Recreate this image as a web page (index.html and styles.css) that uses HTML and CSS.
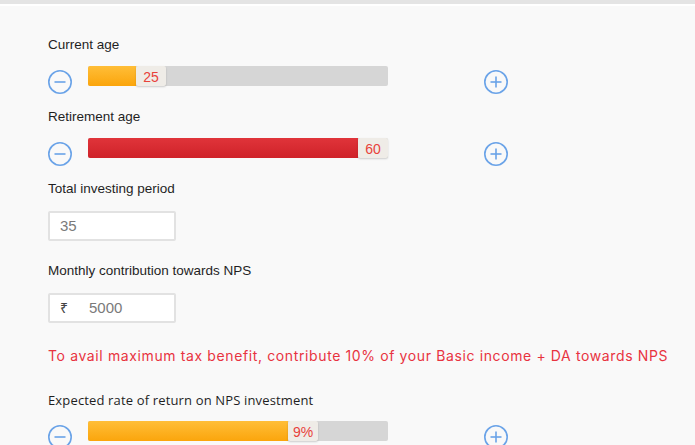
FILE: index.html
```html
<!DOCTYPE html>
<html lang="en">
<head>
    <meta charset="UTF-8">
    <meta name="viewport" content="width=device-width, initial-scale=1.0">
    <title>NPS Calculator</title>
    <link rel="stylesheet" href="styles.css">
</head>
<body>
    <div class="top-band"></div>
    <div class="calculator">
        <div class="field">
            <div class="label">Current age</div>
            <div class="slider-row">
                <button class="step minus" aria-label="decrease">
                    <svg viewBox="0 0 26 26" width="26" height="26"><circle cx="13" cy="13" r="11.2"/><line x1="7.5" y1="13" x2="18.5" y2="13"/></svg>
                </button>
                <div class="track">
                    <div class="fill orange" style="width: 48px"></div>
                    <div class="handle">25</div>
                </div>
                <button class="step plus" aria-label="increase">
                    <svg viewBox="0 0 26 26" width="26" height="26"><circle cx="13" cy="13" r="11.2"/><line x1="7.5" y1="13" x2="18.5" y2="13"/><line x1="13" y1="7.5" x2="13" y2="18.5"/></svg>
                </button>
            </div>
        </div>

        <div class="field">
            <div class="label">Retirement age</div>
            <div class="slider-row">
                <button class="step minus" aria-label="decrease">
                    <svg viewBox="0 0 26 26" width="26" height="26"><circle cx="13" cy="13" r="11.2"/><line x1="7.5" y1="13" x2="18.5" y2="13"/></svg>
                </button>
                <div class="track">
                    <div class="fill red" style="width: 270px"></div>
                    <div class="handle">60</div>
                </div>
                <button class="step plus" aria-label="increase">
                    <svg viewBox="0 0 26 26" width="26" height="26"><circle cx="13" cy="13" r="11.2"/><line x1="7.5" y1="13" x2="18.5" y2="13"/><line x1="13" y1="7.5" x2="13" y2="18.5"/></svg>
                </button>
            </div>
        </div>

        <div class="field boxed">
            <div class="label">Total investing period</div>
            <div class="value-box">35</div>
        </div>

        <div class="field boxed">
            <div class="label">Monthly contribution towards NPS</div>
            <div class="value-box"><span class="rupee">₹</span>5000</div>
        </div>

        <p class="tax-note">To avail maximum tax benefit, contribute 10% of your Basic income + DA towards NPS</p>

        <div class="field">
            <div class="label alt">Expected rate of return on NPS investment</div>
            <div class="slider-row">
                <button class="step minus" aria-label="decrease">
                    <svg viewBox="0 0 26 26" width="26" height="26"><circle cx="13" cy="13" r="11.2"/><line x1="7.5" y1="13" x2="18.5" y2="13"/></svg>
                </button>
                <div class="track">
                    <div class="fill orange" style="width: 200px"></div>
                    <div class="handle">9%</div>
                </div>
                <button class="step plus" aria-label="increase">
                    <svg viewBox="0 0 26 26" width="26" height="26"><circle cx="13" cy="13" r="11.2"/><line x1="7.5" y1="13" x2="18.5" y2="13"/><line x1="13" y1="7.5" x2="13" y2="18.5"/></svg>
                </button>
            </div>
        </div>
    </div>
</body>
</html>
```

FILE: styles.css
```css
* {
    box-sizing: border-box;
    margin: 0;
    padding: 0;
}

body {
    font-family: 'Liberation Sans', Arial, sans-serif;
    background: #f9f9f9;
    color: #222;
    overflow: hidden;
}

.top-band {
    height: 4px;
    background: #e4e4e4;
    border-bottom: 2px solid #ffffff;
    box-sizing: content-box;
}

.calculator {
    padding: 31px 0 0 48px;
}

.field {
    margin-bottom: 23px;
}

.field.boxed {
    margin-bottom: 22px;
}

.label {
    font-size: 13.5px;
    line-height: 16px;
    color: #1f1f1f;
    margin-bottom: 13px;
}

.field.boxed .label {
    margin-bottom: 14px;
}

.label.alt {
    font-family: 'Open Sans', Arial, sans-serif;
    font-size: 13px;
    letter-spacing: 0.15px;
}

.slider-row {
    display: flex;
    align-items: flex-start;
    height: 20px;
}

.step {
    background: none;
    border: none;
    width: 26px;
    height: 26px;
    margin-top: 3px;
    cursor: pointer;
}

.step svg {
    display: block;
    fill: none;
    stroke: #6aa3e8;
    stroke-width: 1.6;
}

.minus {
    margin-left: -1px;
}

.plus {
    margin-left: 95px;
}

.track {
    display: flex;
    width: 300px;
    height: 20px;
    margin-left: 15px;
    background: #d6d6d6;
    border-radius: 2px;
}

.fill {
    height: 100%;
    border-radius: 2px 0 0 2px;
}

.fill.orange {
    background: linear-gradient(#ffbe38, #fba50c);
}

.fill.red {
    background: linear-gradient(#e0343a, #cf2229);
}

.handle {
    width: 30px;
    height: 20px;
    background: #efece7;
    box-shadow: 0 1px 2px rgba(0,0,0,0.18);
    border-radius: 2px;
    color: #e8423b;
    font-size: 14px;
    line-height: 22px;
    text-align: center;
}

.value-box {
    width: 128px;
    height: 30px;
    background: #ffffff;
    border: 2px solid #e2e2e2;
    border-radius: 2px;
    padding-left: 10px;
    font-size: 15px;
    line-height: 26px;
    color: #7a7a7a;
}

.rupee {
    font-family: 'Noto Sans', 'DejaVu Sans', sans-serif;
    font-size: 14px;
    color: #444;
    margin-right: 21px;
}

.tax-note {
    font-family: 'Inter', 'Noto Sans', sans-serif;
    font-size: 14px;
    line-height: 20px;
    letter-spacing: 0.62px;
    color: #e8333f;
    margin: 23px 0 26px;
}
```
